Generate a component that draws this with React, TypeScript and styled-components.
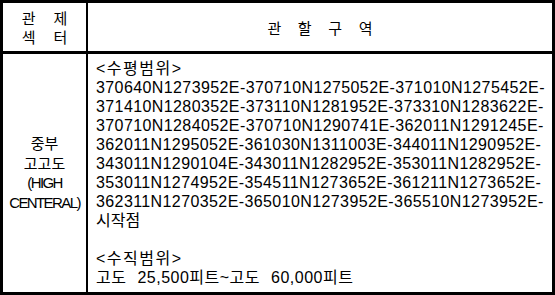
import styled, { createGlobalStyle } from "styled-components";

const GlobalStyle = createGlobalStyle`
  html, body {
    margin: 0;
    padding: 0;
    background: #ffffff;
  }
  body {
    font-family: "Liberation Sans", "Noto Sans CJK KR", sans-serif;
    color: #000000;
  }
`;

const Frame = styled.div`
  width: 555px;
  height: 295px;
  box-sizing: border-box;
  border: 3px solid #000000;
  display: grid;
  grid-template-columns: 85px 1fr;
  grid-template-rows: 51px 1fr;
  background: #ffffff;
`;

const Cell = styled.div<{ $head?: boolean; $first?: boolean }>`
  box-sizing: border-box;
  border-right: ${(p) => (p.$first ? "2px solid #000000" : "none")};
  border-bottom: ${(p) => (p.$head ? "3px solid #000000" : "none")};
  display: flex;
  flex-direction: column;
  justify-content: center;
  align-items: center;
  text-align: center;
`;

const HeadText = styled.div<{ $gap: number }>`
  font-family: "Noto Sans CJK KR", sans-serif;
  font-size: 15px;
  line-height: 19px;
  word-spacing: ${(p) => p.$gap}px;
  white-space: nowrap;
`;

const SectorText = styled.div<{ $narrow?: boolean }>`
  font-size: 15px;
  line-height: 19.5px;
  letter-spacing: ${(p) => (p.$narrow ? "-1.6px" : "0")};
  white-space: nowrap;
`;

const AreaCell = styled.div`
  box-sizing: border-box;
  padding: 5px 0 0 8px;
  display: flex;
  flex-direction: column;
`;

type LineKind = "plain" | "coord" | "title" | "alt";

const spacing: Record<LineKind, string> = {
  plain: "letter-spacing: 0;",
  coord: "letter-spacing: 0.4px;",
  title: "letter-spacing: 1.5px;",
  alt: "letter-spacing: 0.5px; word-spacing: 6px;",
};

const Line = styled.div<{ $kind?: LineKind }>`
  font-size: 16px;
  line-height: 19px;
  height: 19px;
  white-space: nowrap;
  ${(p) => spacing[p.$kind || "plain"]}
`;

const coords = [
  "370640N1273952E-370710N1275052E-371010N1275452E-",
  "371410N1280352E-373110N1281952E-373310N1283622E-",
  "370710N1284052E-370710N1290741E-362011N1291245E-",
  "362011N1295052E-361030N1311003E-344011N1290952E-",
  "343011N1290104E-343011N1282952E-353011N1282952E-",
  "353011N1274952E-354511N1273652E-361211N1273652E-",
  "362311N1270352E-365010N1273952E-365510N1273952E-",
];

export default function App() {
  return (
    <>
      <GlobalStyle />
      <Frame>
        <Cell $head $first>
          <HeadText $gap={14.6}>관 제</HeadText>
          <HeadText $gap={14.6}>섹 터</HeadText>
        </Cell>
        <Cell $head>
          <HeadText $gap={13.3}>관 할 구 역</HeadText>
        </Cell>
        <Cell $first>
          <SectorText>중부</SectorText>
          <SectorText>고고도</SectorText>
          <SectorText $narrow>(HIGH</SectorText>
          <SectorText $narrow>CENTERAL)</SectorText>
        </Cell>
        <AreaCell>
          <Line $kind="title">&lt;수평범위&gt;</Line>
          {coords.map((c) => (
            <Line key={c} $kind="coord">
              {c}
            </Line>
          ))}
          <Line>시작점</Line>
          <Line />
          <Line $kind="title">&lt;수직범위&gt;</Line>
          <Line $kind="alt">고도 25,500피트~고도 60,000피트</Line>
        </AreaCell>
      </Frame>
    </>
  );
}
